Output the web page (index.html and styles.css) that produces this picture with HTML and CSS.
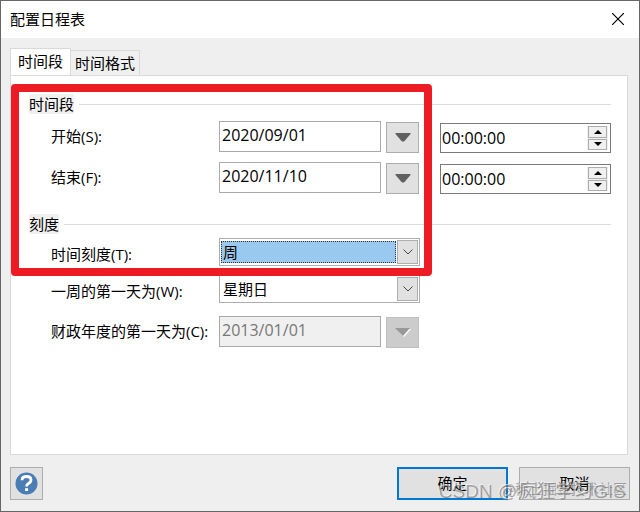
FILE: index.html
```html
<!DOCTYPE html>
<html lang="zh-CN">
<head>
<meta charset="utf-8">
<title>配置日程表</title>
<link rel="stylesheet" href="styles.css">
</head>
<body>
<main class="dialog">
  <header class="titlebar">
    <h1>配置日程表</h1>
    <button class="close" type="button" aria-label="关闭">
      <svg width="12" height="12" viewBox="0 0 12 12"><path d="M0 0L12 12M12 0L0 12" stroke="#000" stroke-width="1.2"/></svg>
    </button>
  </header>
  <div class="content">
    <nav class="tabs" role="tablist">
      <button class="tab active" type="button" role="tab" aria-selected="true">时间段</button>
      <button class="tab" type="button" role="tab" aria-selected="false">时间格式</button>
    </nav>
    <form class="panel">
      <h2 class="group"><span>时间段</span></h2>
      <div class="row">
        <label for="start">开始(S):</label>
        <input id="start" class="date" type="text" value="2020/09/01">
        <button class="drop" type="button" aria-label="选择开始日期"><svg width="16" height="9" viewBox="0 0 16 9"><path d="M1 0H15Q16 0 15.5 1L9.5 8Q8 9 6.500 8L.5 1Q0 0 1 0Z" fill="#606060"/></svg></button>
        <div class="spinner">
          <input type="text" value="00:00:00" aria-label="开始时间">
          <div class="steps">
            <button type="button" aria-label="增加"><svg width="8" height="4" viewBox="0 0 8 4"><path d="M0 4L4 0L8 4Z"/></svg></button>
            <button type="button" aria-label="减少"><svg width="8" height="4" viewBox="0 0 8 4"><path d="M0 0L4 4L8 0Z"/></svg></button>
          </div>
        </div>
      </div>
      <div class="row">
        <label for="end">结束(F):</label>
        <input id="end" class="date" type="text" value="2020/11/10">
        <button class="drop" type="button" aria-label="选择结束日期"><svg width="16" height="9" viewBox="0 0 16 9"><path d="M1 0H15Q16 0 15.5 1L9.5 8Q8 9 6.500 8L.5 1Q0 0 1 0Z" fill="#606060"/></svg></button>
        <div class="spinner">
          <input type="text" value="00:00:00" aria-label="结束时间">
          <div class="steps">
            <button type="button" aria-label="增加"><svg width="8" height="4" viewBox="0 0 8 4"><path d="M0 4L4 0L8 4Z"/></svg></button>
            <button type="button" aria-label="减少"><svg width="8" height="4" viewBox="0 0 8 4"><path d="M0 0L4 4L8 0Z"/></svg></button>
          </div>
        </div>
      </div>
      <h2 class="group second"><span>刻度</span></h2>
      <div class="row combo-row">
        <label for="scale">时间刻度(T):</label>
        <div class="combo focused">
          <select id="scale"><option>周</option></select>
          <span class="arrow"><svg width="10" height="6" viewBox="0 0 10 6"><path d="M.5 .5L5 5L9.500 .5" fill="none" stroke="#444"/></svg></span>
        </div>
      </div>
      <div class="row combo-row last">
        <label for="week">一周的第一天为(W):</label>
        <div class="combo">
          <select id="week"><option>星期日</option></select>
          <span class="arrow"><svg width="10" height="6" viewBox="0 0 10 6"><path d="M.5 .5L5 5L9.500 .5" fill="none" stroke="#444"/></svg></span>
        </div>
      </div>
      <div class="row">
        <label for="fiscal">财政年度的第一天为(C):</label>
        <input id="fiscal" class="date" type="text" value="2013/01/01" disabled>
        <button class="drop" type="button" aria-label="选择财政年度日期" disabled><svg width="16" height="9" viewBox="0 0 16 9"><path d="M3 1H16L9 9L6 6Z" fill="#fff"/><path d="M0 0H15L8 8Z" fill="#999"/></svg></button>
      </div>
    </form>
  </div>
  <footer class="footer">
    <button class="help" type="button" aria-label="帮助">
      <svg width="23" height="23" viewBox="0 0 23 23"><circle cx="11.500" cy="11.500" r="11" fill="#4b7db5"/><path d="M7 8.300Q7 4.500 11.500 4.500Q16 4.500 16 8Q16 10 13.500 11.500Q11.600 12.600 11.600 14.500" fill="none" stroke="#fff" stroke-width="2.800"/><path d="M10.100 16.200H13.100V19H10.100Z" fill="#fff"/></svg>
    </button>
    <button class="action primary" type="button">确定</button>
    <button class="action" type="button">取消</button>
  </footer>
  <div class="highlight"></div>
  <div class="mark community">@稀土掘金技术社区</div>
  <div class="mark author">CSDN @疯狂学习GIS</div>
</main>
</body>
</html>
```
FILE: styles.css
```css
* {
  box-sizing: border-box;
}

body {
  margin: 0;
  font: 15px/20px "Open Sans", "Noto Sans CJK SC", sans-serif;
  color: #000;
}

button,
input,
select {
  margin: 0;
  padding: 0;
  border-radius: 0;
  font: inherit;
  color: inherit;
}

svg {
  display: block;
}

.dialog {
  position: relative;
  display: flex;
  flex-direction: column;
  min-height: 100vh;
  border: 1px solid #676565;
  background: #efefef;
}

.titlebar {
  display: flex;
  align-items: center;
  justify-content: space-between;
  height: 37px;
  padding: 0 15px 2px 9px;
  background: #fff;
}

.titlebar h1 {
  margin: 0;
  font-size: 15px;
  font-weight: 400;
}

.close {
  border: 0;
  background: none;
}

.content {
  display: flex;
  flex: 1;
  flex-direction: column;
  padding: 10px 11px 0 9px;
}

.tabs {
  display: flex;
  align-items: flex-end;
}

.tab {
  height: 25px;
  padding: 0 4px;
  border: 1px solid #d9d9d9;
  border-width: 1px 1px 0 0;
  background: #f0f0f0;
}

.tab.active {
  height: 28px;
  margin-bottom: -1px;
  padding: 0 7px 3px;
  border-left-width: 1px;
  background: #fff;
}

.panel {
  flex: 1;
  padding: 18px 16px 0 18px;
  border: 1px solid #d9d9d9;
  background: #fff;
}

.group {
  display: flex;
  align-items: center;
  gap: 5px;
  height: 20px;
  margin: 0 0 7px;
  font-size: 15px;
  font-weight: 400;
}

.group::after {
  flex: 1;
  height: 1px;
  background: #dcdcdc;
  content: "";
}

.group span {
  background: #f0f0f0;
}

.group.second {
  margin: 20px 0 4px;
}

.row {
  display: grid;
  grid-template-columns: 163px 162px 33px 1fr;
  column-gap: 5px;
  align-items: center;
  height: 32px;
  margin-bottom: 9px;
  padding-left: 22px;
}

.row label {
  margin-right: -5px;
  padding-bottom: 2px;
  white-space: nowrap;
}

.combo-row {
  height: 28px;
}

.combo-row label {
  padding: 3px 0 0;
}

.combo-row.last {
  margin-bottom: 13px;
}

.date {
  align-self: start;
  width: 100%;
  height: 31px;
  padding: 0 2px 4px;
  border: 1px solid #aaa;
  background: #fff;
  font-size: 16px;
}

.date:disabled {
  background: #f0f0f0;
  color: #777;
}

.drop {
  display: grid;
  align-self: end;
  place-items: center;
  height: 31px;
  border: 1px solid #adadad;
  background: #e1e1e1;
}

.drop:disabled {
  border-color: #bfbfbf;
  background: #ccc;
}

.spinner {
  display: flex;
  align-self: end;
  height: 30px;
  margin-left: 16px;
  padding: 2px 2px 2px 1px;
  border: 1px solid #7a7a7a;
}

.spinner input {
  flex: 1;
  width: 0;
  padding-bottom: 1px;
  border: 0;
  font-size: 16px;
}

.steps {
  display: grid;
  gap: 1px;
  width: 21px;
  padding: 0 1px;
  background: #f0f0f0;
}

.steps button {
  display: grid;
  place-items: center;
  border: 1px solid #adadad;
  background: #f0f0f0;
}

.combo {
  position: relative;
  grid-column: 2 / 4;
  height: 28px;
  margin-right: -1px;
  padding: 2px 23px 2px 1px;
  border: 1px solid #adadad;
  background: #fff;
}

.combo select {
  width: 100%;
  height: 22px;
  padding: 0 1px 2px;
  border: 1px solid transparent;
  appearance: none;
  background: #fff;
}

.combo.focused select {
  border: 1px dotted #333;
  background: #99c9ef;
}

.arrow {
  position: absolute;
  top: 1px;
  right: 1px;
  bottom: 1px;
  display: grid;
  place-items: center;
  width: 21px;
  border: 1px solid #adadad;
  background: #e1e1e1;
  pointer-events: none;
}

.footer {
  display: flex;
  gap: 11px;
  padding: 12px 9px 11px;
}

.help {
  display: grid;
  place-items: center;
  width: 33px;
  height: 33px;
  margin-right: auto;
  border: 1px solid #adadad;
  background: #e1e1e1;
}

.action {
  width: 111px;
  height: 33px;
  padding-bottom: 2px;
  border: 1px solid #adadad;
  background: #e1e1e1;
}

.action.primary {
  border: 2px solid #0078d7;
}

.highlight {
  position: absolute;
  top: 83px;
  left: 10px;
  width: 421px;
  height: 192px;
  border: 8px solid #ed1c24;
  border-radius: 4px;
  pointer-events: none;
}

.mark {
  position: absolute;
  white-space: nowrap;
  pointer-events: none;
}

.community {
  right: 12px;
  bottom: 12px;
  color: rgb(90 90 90 / 50%);
  font-size: 14px;
}

.author {
  right: 13px;
  bottom: 9px;
  color: rgb(110 110 110 / 60%);
  font-family: "Liberation Sans", "Noto Sans CJK SC", sans-serif;
  font-size: 19px;
  text-shadow: -1px -1px rgb(255 255 255 / 60%);
}
```
